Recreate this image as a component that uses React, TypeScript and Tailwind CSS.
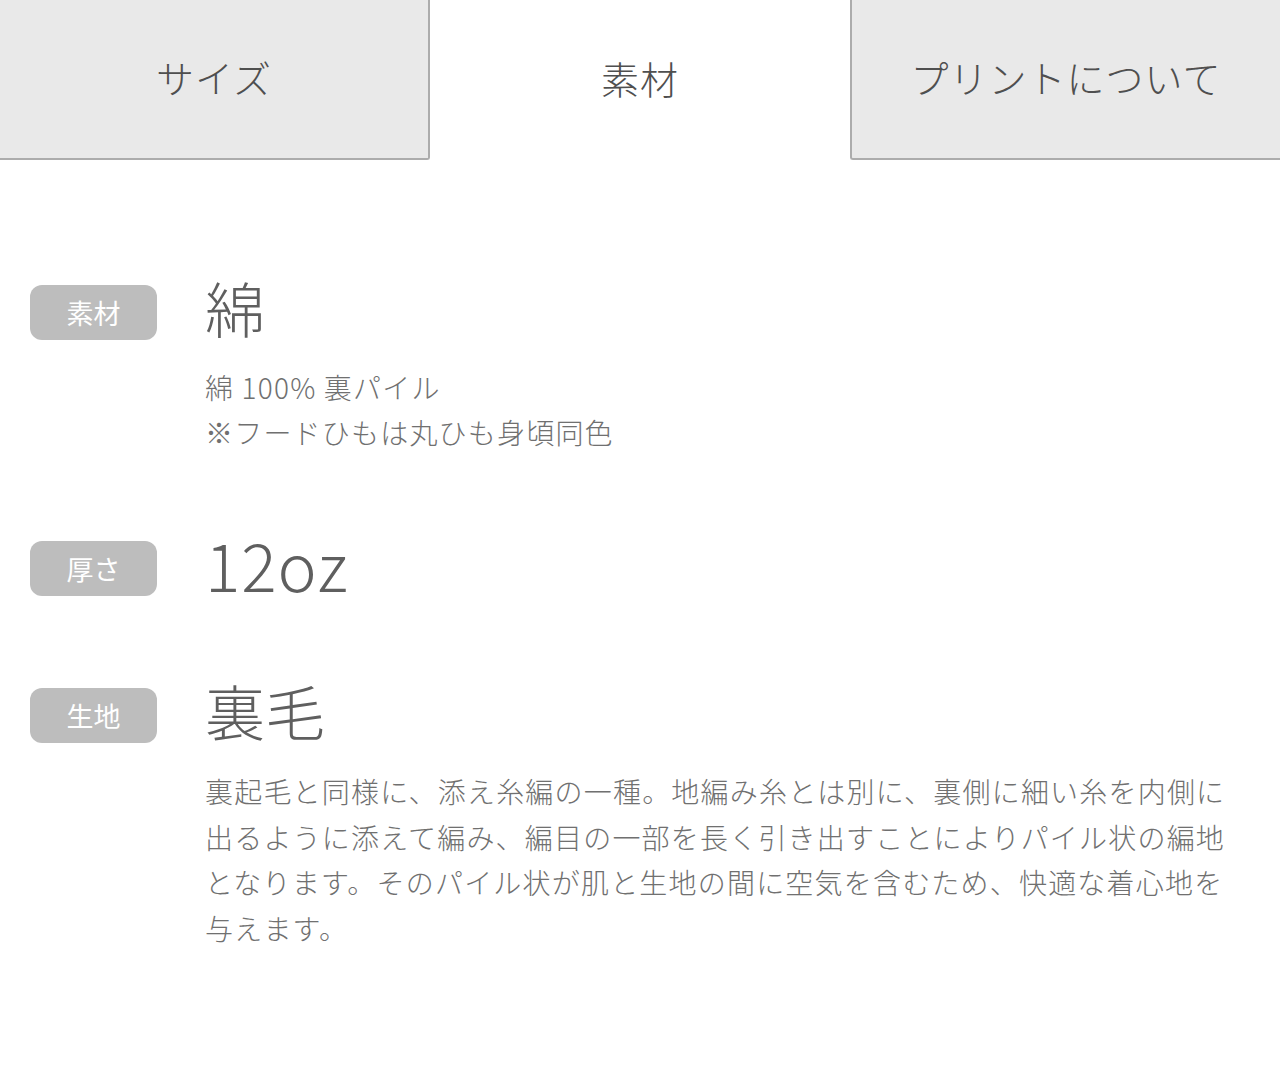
import React from 'react';

const font = { fontFamily: '"Noto Sans CJK JP", "Noto Sans", sans-serif' };

interface SpecRowProps {
  label: string;
  value: string;
  valueClass?: string;
  lines?: string[];
  paragraph?: string;
  className?: string;
}

const SpecRow: React.FC<SpecRowProps> = ({ label, value, valueClass, lines, paragraph, className }) => (
  <div className={`flex items-start ${className ?? ''}`}>
    <div className="mt-[10px] flex h-[55px] w-[127px] shrink-0 items-center justify-center rounded-[12px] bg-[#bdbdbd] text-[27px] leading-none text-white">
      {label}
    </div>
    <div className="ml-[48px] w-[1030px]">
      <div className={`font-light leading-[64px] text-[#5f5f5f] ${valueClass ?? 'text-[60px]'}`}>{value}</div>
      {lines && (
        <div className="mt-[26px] text-[28px] font-light leading-[45px] tracking-[1.2px] text-[#707070]">
          {lines.map((l) => (
            <p key={l}>{l}</p>
          ))}
        </div>
      )}
      {paragraph && (
        <p className="mt-[27px] text-[28px] font-light leading-[45.6px] tracking-[1.2px] text-[#707070]">
          {paragraph}
        </p>
      )}
    </div>
  </div>
);

export default function App() {
  return (
    <div className="min-h-[1090px] w-[1280px] bg-white" style={font}>
      <div className="flex h-[160px]">
        <div className="flex w-[430px] items-center justify-center rounded-br-[3px] border-b-2 border-r-2 border-[#acacac] bg-[#e9e9e9] pb-[6px] text-[38px] font-light tracking-[1px] text-[#4f4f4f]">
          サイズ
        </div>
        <div className="flex w-[420px] items-center justify-center bg-white pb-[6px] text-[38px] font-light tracking-[1px] text-[#4f4f4f]">
          素材
        </div>
        <div className="flex flex-1 items-center justify-center rounded-bl-[3px] border-b-2 border-l-2 border-[#acacac] bg-[#e9e9e9] pb-[6px] text-[38px] font-light tracking-[1px] text-[#4f4f4f]">
          プリントについて
        </div>
      </div>

      <div className="pl-[30px] pt-[115px]">
        <SpecRow
          label="素材"
          value="綿"
          lines={['綿 100% 裏パイル', '※フードひもは丸ひも身頃同色']}
        />
        <SpecRow
          label="厚さ"
          value="12oz"
          valueClass="text-[66px] tracking-[1px]"
          className="mt-[76px]"
        />
        <SpecRow
          label="生地"
          value="裏毛"
          className="mt-[82px]"
          paragraph="裏起毛と同様に、添え糸編の一種。地編み糸とは別に、裏側に細い糸を内側に出るように添えて編み、編目の一部を長く引き出すことによりパイル状の編地となります。そのパイル状が肌と生地の間に空気を含むため、快適な着心地を与えます。"
        />
      </div>
    </div>
  );
}
